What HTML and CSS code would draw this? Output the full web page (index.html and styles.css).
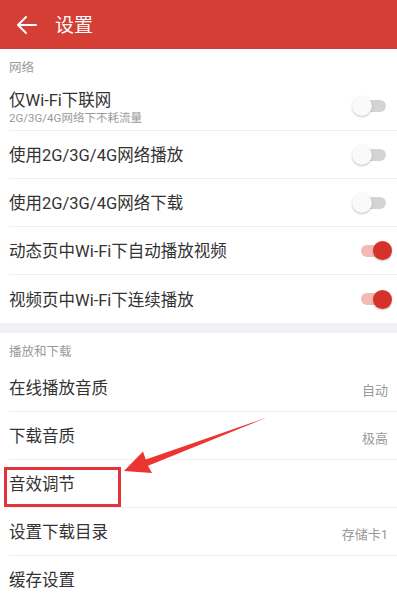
FILE: index.html
```html
<!DOCTYPE html>
<html lang="zh-CN">
<head>
<meta charset="utf-8">
<link rel="stylesheet" href="styles.css">
</head>
<body>
<div class="page">
  <header class="topbar">
    <svg class="back" width="22" height="20" viewBox="0 0 22 20">
      <path d="M3 10 H21 M11 2 L3 10 L11 18" fill="none" stroke="#fff" stroke-width="2" stroke-linecap="round" stroke-linejoin="round"/>
    </svg>
    <span class="title">设置</span>
  </header>

  <div class="label">网络</div>
  <div class="row row-tall">
    <div class="row-in">
      <div class="texts">
        <div class="main">仅Wi-Fi下联网</div>
        <div class="sub">2G/3G/4G网络下不耗流量</div>
      </div>
      <span class="toggle"><span class="track"></span><span class="knob"></span></span>
    </div>
  </div>
  <div class="row">
    <div class="row-in">
      <span class="main">使用2G/3G/4G网络播放</span>
      <span class="toggle"><span class="track"></span><span class="knob"></span></span>
    </div>
  </div>
  <div class="row">
    <div class="row-in">
      <span class="main">使用2G/3G/4G网络下载</span>
      <span class="toggle"><span class="track"></span><span class="knob"></span></span>
    </div>
  </div>
  <div class="row">
    <div class="row-in">
      <span class="main">动态页中Wi-Fi下自动播放视频</span>
      <span class="toggle on"><span class="track"></span><span class="knob"></span></span>
    </div>
  </div>
  <div class="row last">
    <div class="row-in">
      <span class="main">视频页中Wi-Fi下连续播放</span>
      <span class="toggle on"><span class="track"></span><span class="knob"></span></span>
    </div>
  </div>

  <div class="gap"></div>

  <div class="label">播放和下载</div>
  <div class="row">
    <div class="row-in">
      <span class="main">在线播放音质</span>
      <span class="value">自动</span>
    </div>
  </div>
  <div class="row">
    <div class="row-in">
      <span class="main">下载音质</span>
      <span class="value">极高</span>
    </div>
  </div>
  <div class="row">
    <div class="row-in">
      <span class="main">音效调节</span>
    </div>
  </div>
  <div class="row">
    <div class="row-in">
      <span class="main">设置下载目录</span>
      <span class="value">存储卡1</span>
    </div>
  </div>
  <div class="row">
    <div class="row-in">
      <span class="main">缓存设置</span>
    </div>
  </div>

  <div class="mark-box"></div>
  <svg class="mark-arrow" width="397" height="597" viewBox="0 0 397 597">
    <polygon points="124,471 143,451.5 145.8,459.5 267,417.5 148,465.8 152,473" fill="#ec3433"/>
  </svg>
</div>
</body>
</html>
```

FILE: styles.css
```css
* { box-sizing: border-box; }
html, body { margin: 0; padding: 0; background: #fff; }
body {
  font-family: Roboto, "Noto Sans CJK SC", sans-serif;
  color: #333;
}
.page {
  position: relative;
  width: 397px;
  height: 597px;
  overflow: hidden;
  background: #fff;
}
.topbar {
  height: 49px;
  background: #d53e35;
  display: flex;
  align-items: center;
  padding-left: 15px;
}
.back { display: block; margin-right: 18px; }
.title {
  color: #fff;
  font-size: 19px;
  line-height: 24px;
  padding-top: 2px;
}
.label {
  height: 31px;
  padding: 4px 0 0 9px;
  display: flex;
  align-items: center;
  font-size: 12.5px;
  color: #9a9a9a;
}
.row {
  height: 48px;
  padding-left: 9px;
}
.row-in {
  height: 100%;
  display: flex;
  align-items: center;
  justify-content: space-between;
  border-bottom: 1px solid #f0f0f0;
  padding-right: 9px;
  padding-top: 3px;
}
.row.last .row-in { border-bottom: none; }
.row-tall { height: 51px; }
.row-tall .row-in { align-items: flex-start; padding-top: 11px; }
.main {
  font-size: 16.5px;
  line-height: 20px;
  color: #333;
}
.sub {
  font-size: 11.5px;
  line-height: 14px;
  color: #999;
}
.value {
  font-size: 13px;
  color: #999;
}
.gap {
  height: 10px;
  background: #f2f2f6;
}
.toggle {
  position: relative;
  width: 40px;
  height: 20px;
  margin-right: -4px;
  margin-top: -3px;
  flex: none;
}
.row-tall .toggle { margin-top: 5px; }
.toggle .track {
  position: absolute;
  left: 3px;
  right: 6px;
  top: 4px;
  height: 12px;
  border-radius: 6px;
  background: #d4d4d4;
}
.toggle .knob {
  position: absolute;
  left: 0;
  top: 0;
  width: 20px;
  height: 20px;
  border-radius: 50%;
  background: #fafafa;
  box-shadow: 0 1px 2px rgba(0,0,0,0.25);
}
.toggle.on .track { left: 9px; right: 2px; background: #f3b9b5; }
.toggle.on .knob {
  left: auto;
  right: 0;
  width: 19px;
  height: 19px;
  top: 0.5px;
  background: #d7312b;
}
.mark-box {
  position: absolute;
  left: 4px;
  top: 467px;
  width: 117px;
  height: 40px;
  border: 3px solid #e2343a;
}
.mark-arrow {
  position: absolute;
  left: 0;
  top: 0;
  pointer-events: none;
}
```
